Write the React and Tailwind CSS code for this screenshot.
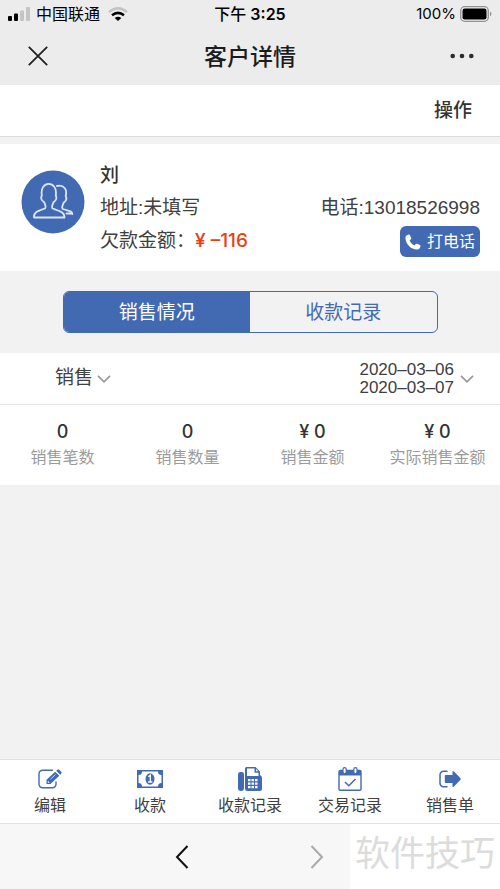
import React, { useState } from "react";

const stats = [
  { value: "0", label: "销售笔数" },
  { value: "0", label: "销售数量" },
  { value: "¥ 0", label: "销售金额" },
  { value: "¥ 0", label: "实际销售金额" },
];

function EditIcon() {
  return (
    <svg viewBox="0 0 24 20" className="h-5 w-6" fill="none" aria-hidden="true">
      <path d="M14.500 1.300H4.500A3.500 3.500 0 0 0 1 4.800V15.200A3.500 3.500 0 0 0 4.500 18.700H14.500A3.500 3.500 0 0 0 18 15.200V13" stroke="currentColor" strokeWidth="1.400" strokeLinecap="round" />
      <path d="M8.500 10.800 17.200 2.700 21.300 6.700 12.500 15H8.500Z" fill="currentColor" />
      <path d="M18.200 1.800 19.500.700Q20.300 0 21.200.700L23.300 2.800Q24 3.600 23.300 4.500L22.200 5.700Z" fill="currentColor" />
      <path d="M12.500 10.200 17.500 5.500" stroke="white" strokeWidth=".7" />
      <path d="M9.800 11.700 11.800 13.700H9.800Z" fill="white" />
    </svg>
  );
}

function MoneyIcon() {
  return (
    <svg viewBox="0 0 26 18" className="h-[18px] w-[26px]" aria-hidden="true">
      <path fillRule="evenodd" fill="currentColor" d="M0 0H26V18H0ZM5 1.500A3.500 3.500 0 0 1 1.500 5V13A3.500 3.500 0 0 1 5 16.500H21A3.500 3.500 0 0 1 24.500 13V5A3.500 3.500 0 0 1 21 1.500Z" />
      <ellipse cx="13" cy="9" rx="4.500" ry="5.700" fill="currentColor" />
      <path d="M11.300 6.700 13.300 5.300V12M11.100 12H15.300" fill="none" stroke="white" strokeWidth="1.300" />
    </svg>
  );
}

function FaxIcon() {
  return (
    <svg viewBox="0 0 24 24" className="size-6" aria-hidden="true">
      <rect x="0" y="5" width="6" height="19" rx="2.400" fill="currentColor" />
      <path fill="currentColor" d="M7 1.500Q7 0 8.500 0H17.500L22 4.500V8Q24 9 24 11V21.500Q24 24 21.500 24H9.500Q7 24 7 22Z" />
      <path fill="white" d="M9 1.600H16.500V5.700H20.500V9H9Z" />
      <path fill="white" d="M18 1.900 20.300 4.200H18Z" />
      <path fill="white" d="M10 12h2.500v2.300H10zM13.500 12H16v2.300h-2.500zM17 12h2.500v2.300H17zM10 15.500h2.500v2.300H10zM13.500 15.500H16v2.300h-2.500zM17 15.500h2.500v2.300H17zM10 19h2.500v2.300H10zM13.500 19H16v2.300h-2.500zM17 19h2.500v2.300H17z" />
    </svg>
  );
}

function CalendarIcon() {
  return (
    <svg viewBox="0 0 24 24" className="size-6" fill="none" aria-hidden="true">
      <rect x="1" y="3.500" width="22" height="19.800" rx="1.200" stroke="currentColor" strokeWidth="1.400" />
      <path d="M1 4H23V8.500H1Z" fill="currentColor" />
      <rect x="5" y=".7" width="3.200" height="6" rx="1.600" fill="white" stroke="currentColor" strokeWidth="1.200" />
      <rect x="15.800" y=".7" width="3.200" height="6" rx="1.600" fill="white" stroke="currentColor" strokeWidth="1.200" />
      <path d="m7 15 3.800 3.800L17.500 12" stroke="currentColor" strokeWidth="1.500" />
    </svg>
  );
}

function ExportIcon() {
  return (
    <svg viewBox="0 0 22 18" className="h-[18px] w-[22px]" fill="none" aria-hidden="true">
      <path d="M8 1.200H4.500A3.500 3.500 0 0 0 1 4.700V13.300A3.500 3.500 0 0 0 4.500 16.800H8" stroke="currentColor" strokeWidth="1.500" strokeLinecap="round" />
      <path d="M13.500 1Q14.300.900 15 1.600L21.500 8.300Q22 9 21.500 9.700L15 16.400Q14.200 17.200 13.500 16.800V13H6.500Q5.800 13 5.800 12.300V5.700Q5.800 5 6.500 5H13.500Z" fill="currentColor" />
    </svg>
  );
}

const actions = [
  { label: "编辑", Icon: EditIcon },
  { label: "收款", Icon: MoneyIcon },
  { label: "收款记录", Icon: FaxIcon },
  { label: "交易记录", Icon: CalendarIcon },
  { label: "销售单", Icon: ExportIcon },
];

function StatusBar() {
  return (
    <div className="grid h-7 grid-cols-3 items-center px-2 font-[Inter,'Noto_Sans_CJK_SC',sans-serif] text-base text-black">
      <div className="flex items-center gap-1.5">
        <svg viewBox="0 0 22 14" className="h-3.5 w-[22px]" aria-hidden="true">
          <rect x="0" y="9" width="4" height="5" rx="1" />
          <rect x="6" y="6.500" width="4" height="7.500" rx="1" />
          <rect x="12" y="3.500" width="4" height="10.500" rx="1" fill="#c4c4c4" />
          <rect x="18" y="0" width="4" height="14" rx="1" fill="#c4c4c4" />
        </svg>
        <span>中国联通</span>
        <svg viewBox="0 0 20 14" className="ml-0.5 h-3.5 w-5" fill="none" aria-hidden="true">
          <path d="M1 5.200Q10-2.500 19 5.200" stroke="#c4c4c4" strokeWidth="2.400" />
          <path d="M4 8.300Q10 3.500 16 8.300" stroke="black" strokeWidth="2.600" />
          <path d="M6.700 11Q10 8.300 13.300 11L10 14Z" fill="black" />
        </svg>
      </div>
      <div className="text-center font-semibold"><span className="font-medium">下午</span> 3:25</div>
      <div className="flex items-center justify-end gap-1">
        <span className="text-[15px]">100%</span>
        <svg viewBox="0 0 32 16" className="h-4 w-8" aria-hidden="true">
          <rect x=".7" y=".7" width="27.600" height="14.600" rx="4" fill="none" stroke="#929292" strokeWidth="1.300" />
          <rect x="2.500" y="2.500" width="24" height="11" rx="2.300" />
          <path d="M30 5.500Q33 8 30 10.500Z" fill="#929292" />
        </svg>
      </div>
    </div>
  );
}

function Chevron() {
  return (
    <svg viewBox="0 0 14 8" className="h-2 w-3.5 shrink-0" fill="none" stroke="#999" strokeWidth="1.700" aria-hidden="true">
      <path d="m1 .8 6 6 6-6" />
    </svg>
  );
}

export default function App() {
  const [tab, setTab] = useState("sales");
  const tabClass = (name) =>
    name === tab ? "flex-1 pt-0.5 bg-[#426ab3] text-white" : "flex-1 pt-0.5 text-[#426ab3]";

  return (
    <div className="flex min-h-screen flex-col bg-[#f2f2f2] font-['Liberation_Sans','Noto_Sans_CJK_SC',sans-serif] text-[#404040]">
      <header className="bg-[#ececec]">
        <StatusBar />
        <div className="flex h-[57px] items-center justify-between px-6 pb-0.5">
          <button aria-label="关闭" className="w-7">
            <svg viewBox="0 0 20 20" className="mx-auto size-5" fill="none" stroke="#222" strokeWidth="1.800" aria-hidden="true">
              <path d="m.8.800 18.400 18.400M19.200.800.800 19.200" />
            </svg>
          </button>
          <h1 className="pt-1 text-[23px] font-medium text-[#1c1c1c]">客户详情</h1>
          <button aria-label="更多" className="w-7">
            <svg viewBox="0 0 24 6" className="mx-auto h-1.5 w-6" fill="#2b2b2b" aria-hidden="true">
              <circle cx="2.700" cy="3" r="2.300" /><circle cx="12" cy="3" r="2.300" /><circle cx="21.300" cy="3" r="2.300" />
            </svg>
          </button>
        </div>
      </header>

      <div className="flex h-[52px] items-center justify-end border-b border-[#dcdcdc] bg-white px-7">
        <button className="pt-0.5 text-[19px] font-medium text-[#333]">操作</button>
      </div>

      <section className="mt-[7px] flex h-[127px] items-start gap-[15px] bg-white pt-[15px] pr-5 pl-[21px]">
        <svg viewBox="0 0 64 64" className="mt-[11px] size-16 shrink-0" fill="none" aria-hidden="true">
          <circle cx="32" cy="32" r="31.500" fill="#426ab3" />
          <g stroke="#dbe5f8" strokeWidth="1.800" strokeLinejoin="round" strokeLinecap="round">
            <path d="M13 47.500C12.500 42 17 41 24 38.500C25.500 37 24.500 35 23 32C20.500 30.500 19.500 28 20.800 25.500C18.500 10 37 10 34.800 25.500C36 28 35 30.500 32.700 32C31.200 35 30.300 37 31.500 38.500C38.500 41 43.500 42 43.500 47.500Z" />
            <path d="M36 16C43 14.500 46.500 19.500 44.700 26C46 28.500 45 31 42.800 32.500C41.300 35.500 40.500 37.500 41.700 39C47.500 41 51 40.500 51.300 44" />
            <path d="M45.500 43.500H51" />
          </g>
        </svg>
        <div className="min-w-0 flex-1 text-[19px]">
          <div className="h-[33px] text-[19px] leading-[33px] font-medium text-[#333]">刘</div>
          <div className="flex h-[33px] items-center justify-between">
            <span>地址:未填写</span>
            <span>电话:13018526998</span>
          </div>
          <div className="flex h-[33px] items-center justify-between">
            <div className="flex items-center">
              <span>欠款金额：</span>
              <span className="font-[Inter,sans-serif] font-medium text-[#e64211]">¥ –116</span>
            </div>
            <button className="flex h-[31px] w-20 items-center justify-center gap-1.5 rounded-md bg-[#426ab3] text-base text-white">
              <svg viewBox="0 0 16 16" className="size-4" fill="white" aria-hidden="true">
                <path d="M1.800 1.200 3.700.500Q4.500.300 4.900 1.100L6.200 4Q6.500 4.700 6 5.200L4.600 6.600C5.600 8.800 7.100 10.300 9.300 11.400L10.700 10Q11.300 9.500 12 9.800L15 11.100Q15.700 11.500 15.500 12.200L14.800 14.100Q14.100 15.600 12.200 15.600C5.600 15.500.400 9.600.400 3.700Q.500 1.900 1.800 1.200Z" />
              </svg>
              打电话
            </button>
          </div>
        </div>
      </section>

      <div className="flex justify-center py-5">
        <div className="flex h-[42px] w-3/4 overflow-hidden rounded-md border border-[#426ab3] text-[19px]">
          <button className={tabClass("sales")} onClick={() => setTab("sales")}>销售情况</button>
          <button className={tabClass("payments")} onClick={() => setTab("payments")}>收款记录</button>
        </div>
      </div>

      <section className="bg-white">
        <div className="flex h-[52px] items-center justify-between border-b border-[#e6e6e6] pr-[26px] pl-[55px]">
          <button className="flex items-center gap-1 text-[19px]">销售<Chevron /></button>
          <button className="flex items-center gap-1.5 text-[17px] leading-[18px]">
            <span>2020–03–06<br />2020–03–07</span>
            <Chevron />
          </button>
        </div>
        <dl className="grid h-20 grid-cols-4 content-center text-center">
          {stats.map(({ value, label }) => (
            <div key={label} className="flex flex-col-reverse">
              <dt className="text-base leading-[26px] whitespace-nowrap text-[#9b9b9b]">{label}</dt>
              <dd className="font-[Inter,sans-serif] text-lg leading-[26px] font-medium text-[#333]">{value}</dd>
            </div>
          ))}
        </dl>
      </section>

      <footer className="mt-auto">
        <nav className="grid h-[65px] grid-cols-5 border-y border-[#e2e2e2] bg-white">
          {actions.map(({ label, Icon }) => (
            <button key={label} className="flex flex-col items-center pt-[7px] text-base leading-5 whitespace-nowrap">
              <span className="flex h-6 items-center text-[#426ab3]"><Icon /></span>
              <span className="pt-[5px]">{label}</span>
            </button>
          ))}
        </nav>
        <div className="flex h-[65px] bg-[#f7f7f7]">
          <div className="flex flex-1 items-center justify-end gap-[121px] pr-[26px]">
            <button aria-label="后退">
              <svg viewBox="0 0 14 24" className="h-6 w-3.5" fill="none" stroke="#111" strokeWidth="2" aria-hidden="true"><path d="M12.500 1 2 12l10.500 11" /></svg>
            </button>
            <button aria-label="前进">
              <svg viewBox="0 0 14 24" className="h-6 w-3.5" fill="none" stroke="#aaa" strokeWidth="2" aria-hidden="true"><path d="M1.500 1 12 12 1.500 23" /></svg>
            </button>
          </div>
          <div className="flex w-[150px] items-center justify-center bg-white text-[35px] text-[#dcdcdc]">
            <span className="pb-1">软件技巧</span>
          </div>
        </div>
      </footer>
    </div>
  );
}
